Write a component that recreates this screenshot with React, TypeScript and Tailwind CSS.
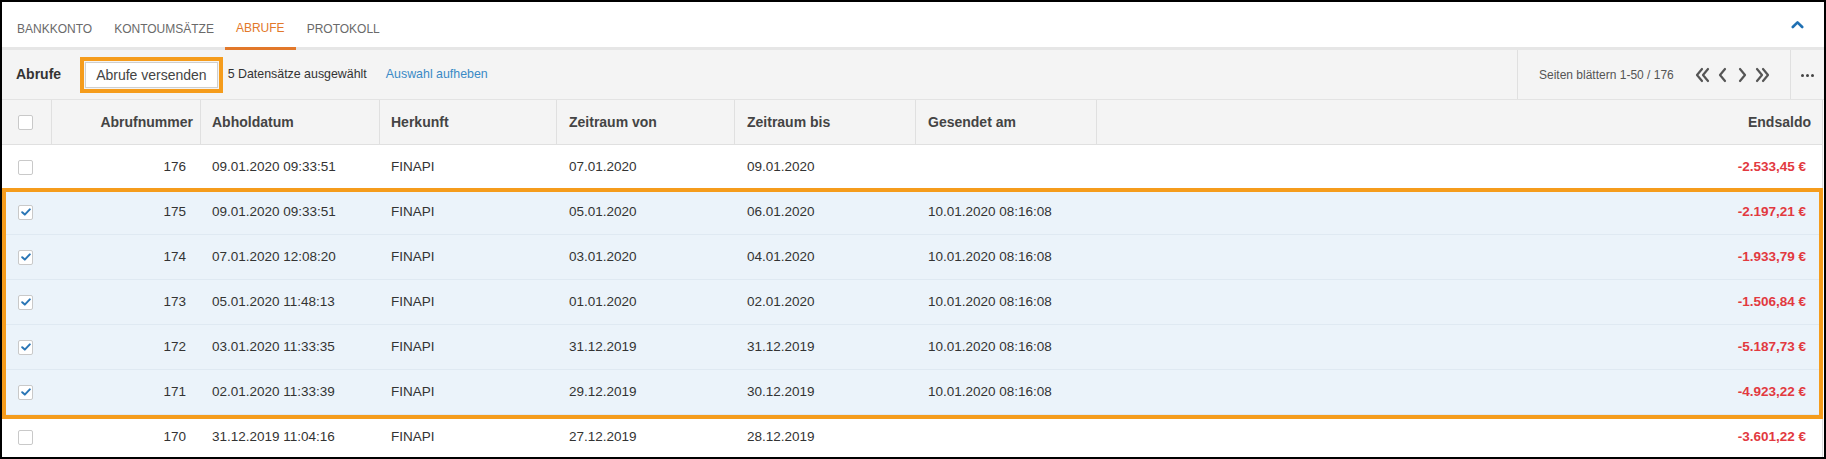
import React from "react";

type Row = {
  id: number;
  abhol: string;
  herkunft: string;
  von: string;
  bis: string;
  gesendet: string;
  saldo: string;
  checked: boolean;
};

const rows: Row[] = [
  { id: 176, abhol: "09.01.2020 09:33:51", herkunft: "FINAPI", von: "07.01.2020", bis: "09.01.2020", gesendet: "", saldo: "-2.533,45 €", checked: false },
  { id: 175, abhol: "09.01.2020 09:33:51", herkunft: "FINAPI", von: "05.01.2020", bis: "06.01.2020", gesendet: "10.01.2020 08:16:08", saldo: "-2.197,21 €", checked: true },
  { id: 174, abhol: "07.01.2020 12:08:20", herkunft: "FINAPI", von: "03.01.2020", bis: "04.01.2020", gesendet: "10.01.2020 08:16:08", saldo: "-1.933,79 €", checked: true },
  { id: 173, abhol: "05.01.2020 11:48:13", herkunft: "FINAPI", von: "01.01.2020", bis: "02.01.2020", gesendet: "10.01.2020 08:16:08", saldo: "-1.506,84 €", checked: true },
  { id: 172, abhol: "03.01.2020 11:33:35", herkunft: "FINAPI", von: "31.12.2019", bis: "31.12.2019", gesendet: "10.01.2020 08:16:08", saldo: "-5.187,73 €", checked: true },
  { id: 171, abhol: "02.01.2020 11:33:39", herkunft: "FINAPI", von: "29.12.2019", bis: "30.12.2019", gesendet: "10.01.2020 08:16:08", saldo: "-4.923,22 €", checked: true },
  { id: 170, abhol: "31.12.2019 11:04:16", herkunft: "FINAPI", von: "27.12.2019", bis: "28.12.2019", gesendet: "", saldo: "-3.601,22 €", checked: false },
];

const cols = "grid grid-cols-[50px_149px_179px_177px_178px_181px_181px_1fr]";

function Checkbox({ checked }: { checked: boolean }) {
  return (
    <div className="w-[15px] h-[15px] bg-white border border-[#c9c9c9] rounded-[2px] flex items-center justify-center">
      {checked && (
        <svg width="10" height="8" viewBox="0 0 10 8">
          <path d="M1.2 4.2 L3.8 6.6 L8.8 1.4" fill="none" stroke="#2a76b6" strokeWidth="2" strokeLinecap="round" strokeLinejoin="round" />
        </svg>
      )}
    </div>
  );
}

function DoubleChevron({ dir }: { dir: "left" | "right" }) {
  const d =
    dir === "left"
      ? "M8 2 L3 8 L8 14 M14 2 L9 8 L14 14"
      : "M2 2 L7 8 L2 14 M8 2 L13 8 L8 14";
  return (
    <svg width="16" height="16" viewBox="0 0 16 16">
      <path d={d} fill="none" stroke="#555" strokeWidth="2.2" strokeLinecap="round" strokeLinejoin="round" />
    </svg>
  );
}

function Chevron({ dir }: { dir: "left" | "right" }) {
  const d = dir === "left" ? "M7 2 L2 8 L7 14" : "M2 2 L7 8 L2 14";
  return (
    <svg width="9" height="16" viewBox="0 0 9 16">
      <path d={d} fill="none" stroke="#555" strokeWidth="2.2" strokeLinecap="round" strokeLinejoin="round" />
    </svg>
  );
}

export default function App() {
  return (
    <div className="w-[1826px] h-[459px] overflow-hidden bg-white font-['Liberation_Sans',Arial,sans-serif] text-[#333]">
      <div className="relative w-[1826px] h-[459px] border-2 border-black overflow-hidden">
        {/* Tabs */}
        <div className="flex items-end h-[48px] border-b-[3px] border-[#e6e6e6] pl-[4px] pr-[14px]">
          {[
            { label: "BANKKONTO", active: false },
            { label: "KONTOUMSÄTZE", active: false },
            { label: "ABRUFE", active: true },
            { label: "PROTOKOLL", active: false },
          ].map((t) => (
            <div
              key={t.label}
              className={
                t.active
                  ? "h-[45px] px-[11px] flex items-center text-[12px] text-[#e2782a] border-b-[3px] border-[#e2782a] -mb-[3px] pt-[3px]"
                  : "h-[45px] px-[11px] flex items-center text-[12px] text-[#6a6a6a] pt-[3px] -mb-[3px]"
              }
            >
              {t.label}
            </div>
          ))}
          <div className="flex-1" />
          <div className="h-[45px] flex items-center pr-[6px]">
            <svg width="13" height="9" viewBox="0 0 13 9">
              <path d="M1.8 7 L6.5 2.3 L11.2 7" fill="none" stroke="#1f70b3" strokeWidth="2.6" strokeLinecap="round" strokeLinejoin="round" />
            </svg>
          </div>
        </div>

        {/* Toolbar */}
        <div className="flex h-[50px] bg-[#f4f4f4] border-b border-[#e3e3e3]">
          <div className="flex-1 flex items-center pl-[14px]">
            <span className="text-[14px] font-bold text-[#333]">Abrufe</span>
            <div className="ml-[19px] border-4 border-[#f59c1c] p-[1px]">
              <button className="h-[26px] px-[10px] bg-white border border-[#cfcfcf] text-[14px] text-[#444] leading-none">
                Abrufe versenden
              </button>
            </div>
            <span className="ml-[5px] text-[12.4px] text-[#333]">5 Datensätze ausgewählt</span>
            <span className="ml-[19px] text-[12.4px] text-[#3a8ac6]">Auswahl aufheben</span>
          </div>
          <div className="w-[273px] border-l border-[#e0e0e0] flex items-center pl-[21px]">
            <span className="text-[12px] text-[#555]">Seiten blättern 1-50 / 176</span>
            <div className="ml-[20px] flex items-center gap-[6px]">
              <DoubleChevron dir="left" />
              <span className="ml-[2px]"><Chevron dir="left" /></span>
              <span className="ml-[5px]"><Chevron dir="right" /></span>
              <span className="ml-[2px]"><DoubleChevron dir="right" /></span>
            </div>
          </div>
          <div className="w-[34px] border-l border-[#e0e0e0] flex items-center justify-center">
            <div className="flex gap-[1.5px] mt-[2px]">
              <span className="w-[3.5px] h-[3.5px] rounded-full bg-[#444]" />
              <span className="w-[3.5px] h-[3.5px] rounded-full bg-[#444]" />
              <span className="w-[3.5px] h-[3.5px] rounded-full bg-[#444]" />
            </div>
          </div>
        </div>

        {/* Table */}
        <div className="mr-[1px] border-r border-[#dcdcdc]">
          <div className={`${cols} h-[45px] bg-[#f4f4f4] border-b border-[#e0e0e0] text-[14px] font-bold text-[#444]`}>
            <div className="flex items-center pl-[16px] border-r border-[#e0e0e0]">
              <Checkbox checked={false} />
            </div>
            <div className="flex items-center justify-end pr-[7px] border-r border-[#e0e0e0]">Abrufnummer</div>
            <div className="flex items-center pl-[11px] border-r border-[#e0e0e0]">Abholdatum</div>
            <div className="flex items-center pl-[11px] border-r border-[#e0e0e0]">Herkunft</div>
            <div className="flex items-center pl-[12px] border-r border-[#e0e0e0]">Zeitraum von</div>
            <div className="flex items-center pl-[12px] border-r border-[#e0e0e0]">Zeitraum bis</div>
            <div className="flex items-center pl-[12px] border-r border-[#e0e0e0]">Gesendet am</div>
            <div className="flex items-center justify-end pr-[11px]">Endsaldo</div>
          </div>
          {rows.map((r) => (
            <div
              key={r.id}
              className={`${cols} h-[45px] border-b text-[13.5px] ${r.checked ? "bg-[#ebf3fa] border-[#dfe9f2]" : "bg-white border-[#ececec]"}`}
            >
              <div className="flex items-center pl-[16px]">
                <Checkbox checked={r.checked} />
              </div>
              <div className="flex items-center justify-end pr-[15px]">{r.id}</div>
              <div className="flex items-center pl-[11px]">{r.abhol}</div>
              <div className="flex items-center pl-[11px]">{r.herkunft}</div>
              <div className="flex items-center pl-[12px]">{r.von}</div>
              <div className="flex items-center pl-[12px]">{r.bis}</div>
              <div className="flex items-center pl-[12px]">{r.gesendet}</div>
              <div className="flex items-center justify-end pr-[16px] font-bold text-[#e2393f]">{r.saldo}</div>
            </div>
          ))}
        </div>

        {/* Highlight annotation */}
        <div className="absolute left-0 top-[186px] w-[1821px] h-[231px] border-4 border-[#f59c1c] pointer-events-none" />
      </div>
    </div>
  );
}
